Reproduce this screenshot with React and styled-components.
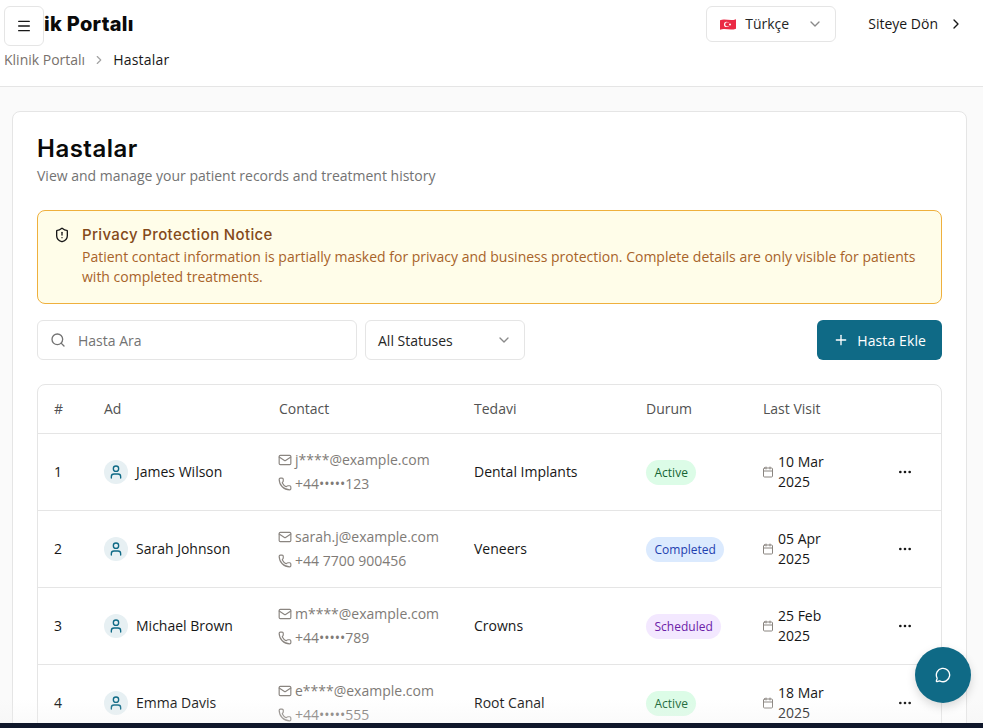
import styled, { createGlobalStyle } from "styled-components";
import {
  Calendar,
  ChevronDown,
  ChevronRight,
  Ellipsis,
  Mail,
  Menu,
  MessageCircle,
  Phone,
  Plus,
  Search,
  ShieldAlert,
  User,
} from "lucide-react";

const patients = [
  { id: 1, name: "James Wilson", email: "j****@example.com", phone: "+44•••••123", treatment: "Dental Implants", status: "Active", date: "10 Mar 2025" },
  { id: 2, name: "Sarah Johnson", email: "sarah.j@example.com", phone: "+44 7700 900456", treatment: "Veneers", status: "Completed", date: "05 Apr 2025" },
  { id: 3, name: "Michael Brown", email: "m****@example.com", phone: "+44•••••789", treatment: "Crowns", status: "Scheduled", date: "25 Feb 2025" },
  { id: 4, name: "Emma Davis", email: "e****@example.com", phone: "+44•••••555", treatment: "Root Canal", status: "Active", date: "18 Mar 2025" },
];

const statusColors = {
  Active: { bg: "#dcfce7", fg: "#166534" },
  Completed: { bg: "#dbeafe", fg: "#1e40af" },
  Scheduled: { bg: "#f3e8ff", fg: "#6b21a8" },
};

function App() {
  return (
    <Page>
      <GlobalStyle />
      <Header>
        <TopRow>
          <Logo>Klinik Portalı</Logo>
          <HeaderActions>
            <LanguageButton>
              <svg width="18" height="13" viewBox="0 0 18 13">
                <path d="M1 2.2C6 .2 11 3.4 17 1.2v9.6c-6 2.2-11-1-16 1z" fill="#ea2a45" />
                <circle cx="7.6" cy="6.4" r="2.6" fill="#fff" />
                <circle cx="8.3" cy="6.4" r="2.1" fill="#ea2a45" />
                <circle cx="11" cy="6.4" r="1" fill="#fff" />
              </svg>
              <HeaderText>Türkçe</HeaderText>
              <ChevronDown size={16} color="#8a8a8a" />
            </LanguageButton>
            <BackLink>
              <HeaderText>Siteye Dön</HeaderText>
              <ChevronRight size={16} color="#171717" />
            </BackLink>
          </HeaderActions>
        </TopRow>
        <Breadcrumb>
          <span>Klinik Portalı</span>
          <ChevronRight size={14} color="#a3a3a3" />
          <strong>Hastalar</strong>
        </Breadcrumb>
        <MenuButton>
          <Menu size={16} color="#171717" />
        </MenuButton>
      </Header>

      <Main>
        <Card>
          <Title>Hastalar</Title>
          <Subtitle>View and manage your patient records and treatment history</Subtitle>

          <Notice>
            <ShieldAlert size={16} color="#171717" />
            <div>
              <NoticeTitle>Privacy Protection Notice</NoticeTitle>
              <NoticeText>
                Patient contact information is partially masked for privacy and business protection. Complete details are only visible for patients with completed treatments.
              </NoticeText>
            </div>
          </Notice>

          <Toolbar>
            <SearchBox>
              <Search size={16} color="#737373" />
              <span>Hasta Ara</span>
            </SearchBox>
            <StatusSelect>
              All Statuses
              <ChevronDown size={16} color="#8a8a8a" />
            </StatusSelect>
            <AddButton>
              <Plus size={16} color="#fff" />
              Hasta Ekle
            </AddButton>
          </Toolbar>

          <Table>
            <HeadRow>
              <span>#</span>
              <span>Ad</span>
              <span>Contact</span>
              <span>Tedavi</span>
              <span>Durum</span>
              <span>Last Visit</span>
              <span />
            </HeadRow>
            {patients.map((p) => (
              <Row key={p.id}>
                <TextCell>{p.id}</TextCell>
                <NameCell>
                  <Avatar>
                    <User size={16} color="#0f6a86" />
                  </Avatar>
                  <NameText>{p.name}</NameText>
                </NameCell>
                <ContactCell>
                  <ContactLine>
                    <Mail size={14} />
                    {p.email}
                  </ContactLine>
                  <ContactLine>
                    <Phone size={14} />
                    {p.phone}
                  </ContactLine>
                </ContactCell>
                <TextCell>{p.treatment}</TextCell>
                <div>
                  <Badge $status={p.status}>{p.status}</Badge>
                </div>
                <DateCell>
                  <Calendar size={12} color="#8a8580" />
                  <DateText>{p.date}</DateText>
                </DateCell>
                <MoreCell>
                  <Ellipsis size={16} color="#171717" />
                </MoreCell>
              </Row>
            ))}
          </Table>
        </Card>
      </Main>

      <BottomFade />
      <ChatButton>
        <MessageCircle size={16} color="#fff" />
      </ChatButton>
      <BottomBar />
    </Page>
  );
}

export default App;

const GlobalStyle = createGlobalStyle`
  * {
    box-sizing: border-box;
  }
  body {
    margin: 0;
    background: #fafafa;
    color: #171717;
    font-family: "Open Sans", sans-serif;
    font-size: 14px;
  }
`;

const Page = styled.div`
  position: relative;
  height: 728px;
  overflow: hidden;
  background: #fafafa;
`;

const Header = styled.header`
  position: relative;
  height: 87px;
  padding: 6px 19px 0 4px;
  background: #fff;
  border-bottom: 1px solid #e5e5e5;
`;

const TopRow = styled.div`
  display: flex;
  align-items: center;
  justify-content: space-between;
  height: 36px;
`;

const Logo = styled.div`
  font-family: Inter, sans-serif;
  font-size: 20px;
  font-weight: 800;
  letter-spacing: 0.3px;
  color: #0a0a0a;
`;

const HeaderActions = styled.div`
  display: flex;
  align-items: center;
  gap: 32px;
`;

const LanguageButton = styled.div`
  display: flex;
  align-items: center;
  width: 130px;
  height: 36px;
  padding: 0 12px;
  gap: 8px;
  background: #fff;
  border: 1px solid #e5e5e5;
  border-radius: 6px;
  color: #262626;

  svg:last-child {
    margin-left: auto;
  }
`;

const HeaderText = styled.span`
  padding-bottom: 2px;
`;

const BackLink = styled.div`
  display: flex;
  align-items: center;
  gap: 10px;
  color: #171717;
`;

const Breadcrumb = styled.nav`
  display: flex;
  align-items: center;
  gap: 7px;
  margin-top: 8px;
  color: #78716c;

  strong {
    font-weight: 400;
    letter-spacing: 0.2px;
    color: #171717;
  }
`;

const MenuButton = styled.div`
  position: absolute;
  top: 6px;
  left: 4px;
  display: flex;
  align-items: center;
  justify-content: center;
  width: 40px;
  height: 40px;
  background: #fff;
  border: 1px solid #e5e5e5;
  border-radius: 6px;
`;

const Main = styled.main`
  padding: 24px 16px 0 12px;
`;

const Card = styled.section`
  padding: 21px 24px 24px;
  background: #fff;
  border: 1px solid #e5e5e5;
  border-radius: 8px;
`;

const Title = styled.h1`
  margin: 0;
  font-family: Inter, sans-serif;
  font-size: 24px;
  line-height: 32px;
  font-weight: 600;
  letter-spacing: 0.5px;
  color: #0a0a0a;
`;

const Subtitle = styled.p`
  margin: 1px 0 0;
  line-height: 20px;
  color: #737373;
`;

const Notice = styled.div`
  display: flex;
  gap: 12px;
  margin-top: 24px;
  padding: 14px 16px 16px;
  background: #fffde9;
  border: 1px solid #efb03d;
  border-radius: 8px;

  > svg {
    flex: none;
    margin-top: 2px;
  }
`;

const NoticeTitle = styled.div`
  margin-bottom: 2px;
  font-family: Inter, sans-serif;
  font-size: 15px;
  line-height: 20px;
  font-weight: 500;
  letter-spacing: 0.36px;
  color: #844a1a;
`;

const NoticeText = styled.div`
  line-height: 20px;
  color: #a8632a;
`;

const Toolbar = styled.div`
  display: flex;
  align-items: center;
  gap: 8px;
  margin-top: 16px;
`;

const SearchBox = styled.div`
  display: flex;
  align-items: center;
  gap: 12px;
  width: 320px;
  height: 40px;
  padding: 0 12px;
  border: 1px solid #e5e5e5;
  border-radius: 6px;
  color: #737373;
`;

const StatusSelect = styled.div`
  display: flex;
  align-items: center;
  justify-content: space-between;
  width: 160px;
  height: 40px;
  padding: 0 12px;
  border: 1px solid #e5e5e5;
  border-radius: 6px;
  color: #262626;
`;

const AddButton = styled.div`
  display: flex;
  align-items: center;
  gap: 8px;
  height: 40px;
  margin-left: auto;
  padding: 0 16px;
  background: #0f6a86;
  border-radius: 6px;
  letter-spacing: 0.1px;
  color: #fff;
`;

const Table = styled.div`
  margin-top: 24px;
  border: 1px solid #e5e5e5;
  border-radius: 8px;
`;

const columns = "50px 175px 195px 172px 117px 1fr 60px";

const HeadRow = styled.div`
  display: grid;
  grid-template-columns: ${columns};
  align-items: center;
  height: 49px;
  border-bottom: 1px solid #e5e5e5;
  color: #525252;

  > span {
    padding: 0 0 2px 16px;
  }
`;

const Row = styled.div`
  display: grid;
  grid-template-columns: ${columns};
  align-items: center;
  height: 77px;
  border-bottom: 1px solid #e5e5e5;

  > * {
    padding-left: 16px;
  }
`;

const TextCell = styled.span`
  padding-bottom: 2px;
`;

const NameCell = styled.div`
  display: flex;
  align-items: center;
  gap: 8px;
`;

const NameText = styled.span`
  padding-bottom: 2px;
`;

const Avatar = styled.div`
  display: flex;
  align-items: center;
  justify-content: center;
  width: 24px;
  height: 24px;
  background: #e7f0f3;
  border-radius: 50%;
`;

const ContactCell = styled.div`
  display: flex;
  flex-direction: column;
  gap: 4px;
`;

const ContactLine = styled.div`
  display: flex;
  align-items: center;
  gap: 3px;
  margin-left: -1px;
  line-height: 20px;
  color: #807b77;

  svg {
    flex: none;
    color: #8a8580;
  }
`;

const Badge = styled.span`
  display: inline-block;
  padding: 0 8.5px;
  font-size: 12px;
  line-height: 25px;
  border-radius: 999px;
  background: ${(p) => statusColors[p.$status].bg};
  color: ${(p) => statusColors[p.$status].fg};
`;

const DateCell = styled.div`
  display: flex;
  align-items: center;
  gap: 4px;

  && {
    padding-left: 15px;
  }
`;

const DateText = styled.span`
  max-width: 60px;
  line-height: 20px;
`;

const MoreCell = styled.div`
  display: flex;
  align-items: center;
`;

const BottomFade = styled.div`
  position: absolute;
  left: 0;
  right: 0;
  bottom: 5px;
  height: 24px;
  background: linear-gradient(to bottom, rgba(240, 240, 240, 0), rgba(240, 240, 240, 0.3));
  pointer-events: none;
`;

const ChatButton = styled.div`
  position: absolute;
  right: 12px;
  bottom: 25px;
  display: flex;
  align-items: center;
  justify-content: center;
  width: 56px;
  height: 56px;
  background: #0f6a86;
  border-radius: 50%;
  box-shadow: 0 4px 10px rgba(0, 0, 0, 0.15);
`;

const BottomBar = styled.div`
  position: absolute;
  left: 0;
  right: 0;
  bottom: 0;
  height: 5px;
  background: #0f172a;
`;
